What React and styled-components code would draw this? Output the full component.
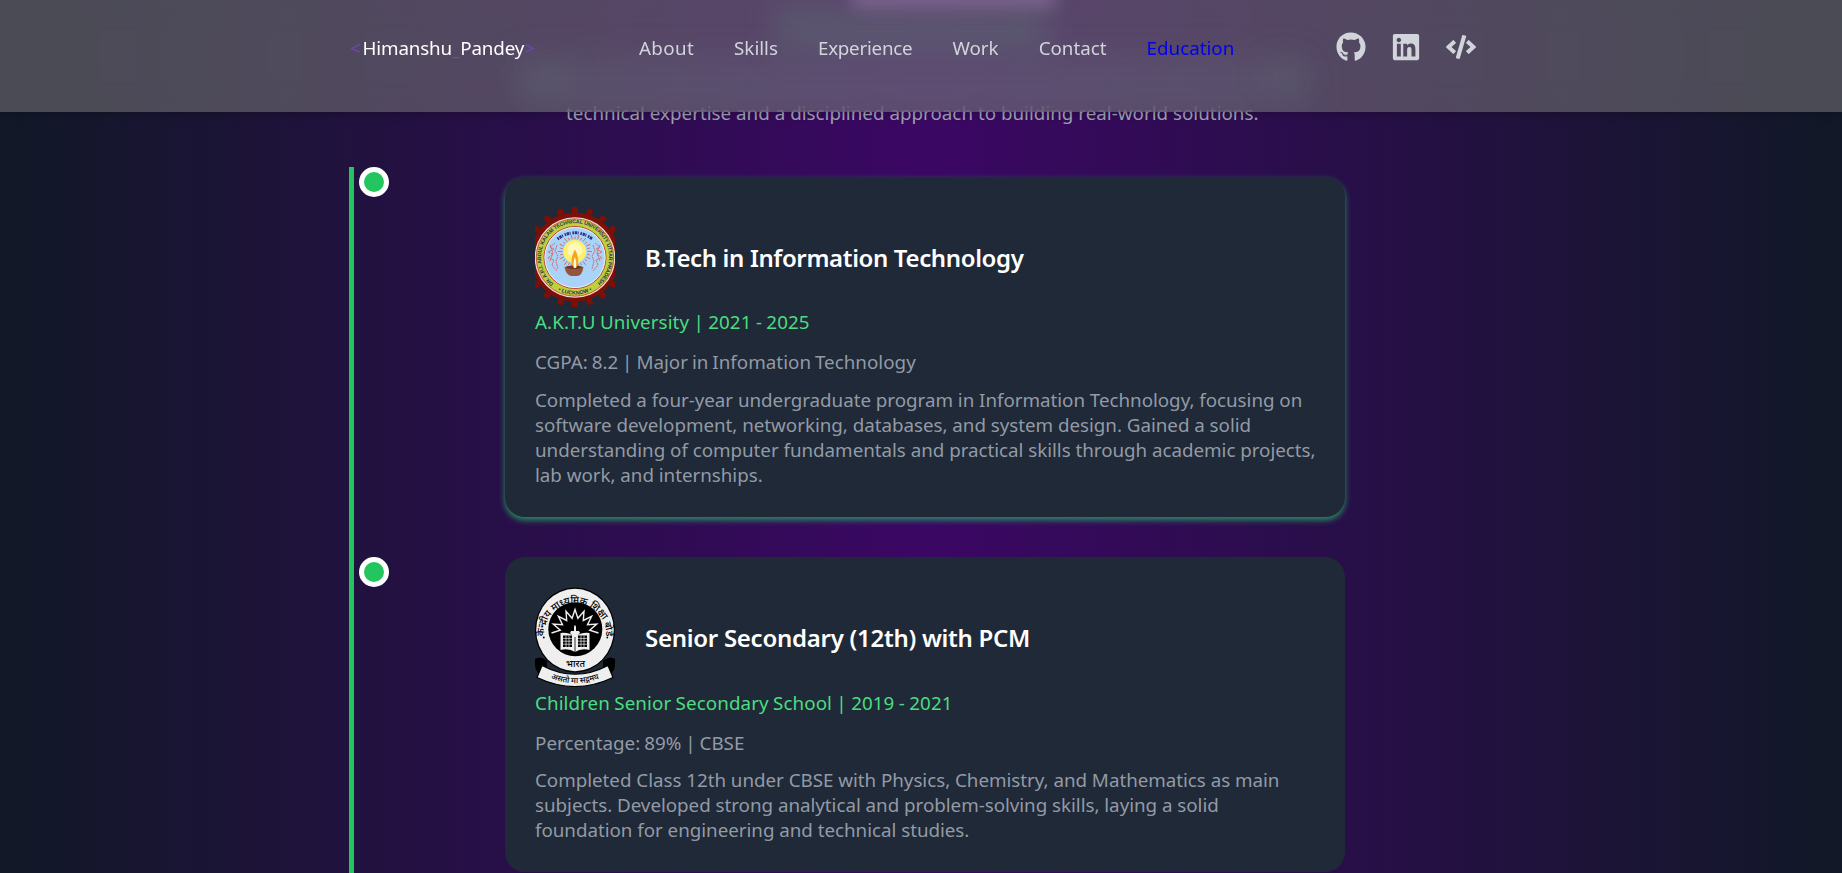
import React from "react";
import styled, { createGlobalStyle } from "styled-components";
import { FaGithub, FaLinkedin, FaCode } from "react-icons/fa";

const GlobalStyle = createGlobalStyle`
  * { box-sizing: border-box; }
  body {
    margin: 0;
    overflow: hidden;
    background: #111827;
    font-family: "Noto Sans", "Open Sans", sans-serif;
    font-size: 18.8px;
    line-height: 25px;
  }
  p, h3 { margin: 0; }
`;

const Page = styled.div`
  position: relative;
  height: 873px;
  overflow: hidden;
  background: linear-gradient(90deg, #111827 0%, #3b0764 50.5%, #111827 100%);
`;

const Header = styled.header`
  position: absolute;
  inset: 0 0 auto 0;
  z-index: 2;
  height: 112px;
  overflow: hidden;
  background: rgba(115, 113, 117, 0.58);
  backdrop-filter: blur(16px);
`;

const HeaderShadow = styled.div`
  position: absolute;
  inset: 0 0 auto 0;
  height: 112px;
  box-shadow: 0 3px 7px rgba(0, 0, 0, 0.18);
`;

const Glow = styled.span`
  position: absolute;
  left: ${(p) => p.$x}px;
  top: ${(p) => p.$y}px;
  width: ${(p) => p.$w}px;
  height: ${(p) => p.$h}px;
  background: ${(p) => p.$color};
  filter: blur(${(p) => p.$blur}px);
`;

const Nav = styled.nav`
  position: relative;
  display: flex;
  align-items: center;
  height: 94px;
  padding-left: 350px;
`;

const Brand = styled.div`
  width: 289px;
  padding-top: 2px;
  color: #fff;
  letter-spacing: -0.15px;
  white-space: nowrap;
`;

const Accent = styled.span`
  color: #7443be;
  letter-spacing: ${(p) => (p.$spaced ? "1.8px" : "inherit")};
`;

const Links = styled.ul`
  display: flex;
  gap: 40px;
  width: 697px;
  margin: 0;
  padding: 2px 0 0;
  list-style: none;
`;

const NavItem = styled.li`
  color: ${(p) => (p.$active ? "#0000ee" : "#d1d5db")};
  letter-spacing: ${(p) => p.$track}px;
  white-space: nowrap;
`;

const Socials = styled.div`
  display: flex;
  gap: 25px;
  color: #d1d5db;
  font-size: 30px;
  svg { display: block; }
`;

const Main = styled.main`
  padding-top: 101px;
`;

const Intro = styled.p`
  padding-left: 566px;
  height: 25px;
  color: #9ca3af;
  letter-spacing: 0.01px;
  white-space: nowrap;
`;

const Timeline = styled.section`
  display: flex;
  flex-direction: column;
  gap: 40.5px;
  margin: 41px 0 0 349px;
  padding-left: 5px;
  min-height: 760px;
  border-left: 5px solid #22c55e;
`;

const Entry = styled.article`
  display: grid;
  grid-template-columns: 30px 840px;
  column-gap: 116px;
  align-items: start;
`;

const Dot = styled.span`
  width: 30px;
  height: 30px;
  border: 5px solid #fff;
  border-radius: 50%;
  background: #22c55e;
`;

const Card = styled.div`
  margin-top: ${(p) => (p.$raised ? "9.5px" : "0")};
  padding: 30px 30px 29px;
  border-radius: 20px;
  background: #1f2937;
  box-shadow: ${(p) => (p.$raised ? "0 3px 6px rgba(38, 170, 98, 0.85)" : "none")};
`;

const CardHead = styled.div`
  display: flex;
  align-items: center;
  gap: 30px;
  height: 100px;
  margin-bottom: 3.5px;
`;

const Degree = styled.h3`
  padding-top: 2px;
  color: #fff;
  font-size: 24px;
  font-weight: 600;
  line-height: 32px;
  letter-spacing: ${(p) => p.$track}px;
  white-space: nowrap;
`;

const School = styled.p`
  margin-bottom: 15px;
  color: #4ade80;
  letter-spacing: 0.08px;
  word-spacing: -0.6px;
`;

const Score = styled.p`
  margin-bottom: 12.5px;
  color: #9ca3af;
  letter-spacing: 0.02px;
  word-spacing: -1px;
  opacity: 0.93;
`;

const Description = styled.p`
  color: #9ca3af;
  letter-spacing: -0.03px;
  white-space: pre;
  opacity: 0.93;
`;

const Emblem = styled.svg`
  display: block;
  flex: none;
  width: 80px;
  height: 100px;
`;

const range = (n) => Array.from({ length: n }, (_, i) => i);

function UniversityEmblem() {
  return (
    <Emblem viewBox="0 0 80 100">
      <defs>
        <path id="uniRing" d="M18.6 76.7 A34 34 0 1 1 61.4 76.7" />
        <path id="uniBase" d="M17 79.6 A37 37 0 0 0 63 79.6" />
      </defs>
      {range(20).map((i) => (
        <rect key={i} x="37" y="0" width="6" height="9" fill="#7b1008" transform={`rotate(${i * 18} 40 50)`} />
      ))}
      <circle cx="40" cy="50" r="44.5" fill="#7b1008" />
      <circle cx="40" cy="50.5" r="40.3" fill="#f3dcd2" />
      <circle cx="40" cy="50.5" r="38.7" fill="#bfd03a" stroke="#c43b30" strokeWidth=".8" />
      <circle cx="40" cy="50.5" r="31" fill="#a9d3f8" stroke="#c43b30" strokeWidth="1" />
      <circle cx="40" cy="50.5" r="30.1" fill="none" stroke="#eef4f0" strokeWidth=".9" />
      <g fill="#29305e" fontFamily="Liberation Sans, sans-serif" fontWeight="700">
        <text fontSize="5.2"><textPath href="#uniRing" textLength="166" lengthAdjust="spacing">DR. A.P.J. ABDUL KALAM TECHNICAL UNIVERSITY UTTAR PRADESH</textPath></text>
        <text fontSize="5.4"><textPath href="#uniBase" startOffset="50%" textAnchor="middle">• LUCKNOW •</textPath></text>
      </g>
      <path d="M22.5 32 Q40 19.5 57.5 32" fill="none" stroke="#26348a" strokeWidth="3" strokeDasharray="1.6 .7 2.4 .6 1 1.8" />
      <g stroke="#dc5a4c" strokeWidth=".8">
        {range(28).map((i) => (
          <path key={i} d={i % 2 ? "M40 32 V27.5" : "M40 32 V29.5"} transform={`rotate(${(i * 360) / 28} 40 44.5)`} />
        ))}
      </g>
      <g fill="none" stroke="#d66a6a" strokeWidth="1">
        <path d="M20 36 l-5 4 4 2 -6 3 5 2 -5 4 6 2 -2 5 5 6 M22 38 l-2 6 3 5 -2 5 2 8 M15 38 l3 8 -3 8" strokeDasharray="2 .6" />
        <path d="M60 36 l5 4 -4 2 6 3 -5 2 5 4 -6 2 2 5 -5 6 M58 38 l2 6 -3 5 2 5 -2 8 M65 38 l-3 8 3 8" strokeDasharray="2 .6" />
      </g>
      <circle cx="39.8" cy="44.5" r="11.4" fill="#fff06e" />
      <circle cx="39.8" cy="43" r="7.5" fill="#fff8b8" />
      <path d="M29.5 60 Q39 57 48.5 60 Q47 69 42 69 H36 Q31 68 29.5 60Z" fill="#94543e" />
      <ellipse cx="39" cy="60.3" rx="8" ry="1.8" fill="#6e3829" />
      <path d="M39 61 Q33.5 54 40 42.5 Q46 54 41 61Z" fill="#f3a51d" />
      <path d="M39.2 61 Q37.5 56 40 50 Q42 56 40.6 61Z" fill="#fffbd8" />
    </Emblem>
  );
}

const burst = range(17)
  .map((i) => {
    const a = Math.PI + (i / 16) * Math.PI;
    const r = i % 2 ? 15 : 23.5;
    return `${i ? "L" : "M"}${(40 + r * Math.cos(a)).toFixed(1)} ${(46 + r * Math.sin(a)).toFixed(1)}`;
  })
  .join(" ");

function BoardEmblem() {
  return (
    <Emblem viewBox="0 0 80 100">
      <defs>
        <path id="boardRing" d="M9.5 53 A31 31 0 1 1 70.5 53" />
        <path id="boardRibbon" d="M7 87.5 Q40 105 73 87.5" />
      </defs>
      <path d="M0 72 Q6 68 12 74 V84 L3 86 Q0 82 0 78Z M80 72 Q74 68 68 74 V84 L77 86 Q80 82 80 78Z" fill="#000" />
      <ellipse cx="40" cy="43" rx="40" ry="42.5" fill="#000" />
      <ellipse cx="40" cy="43" rx="38.8" ry="41.2" fill="#efefef" />
      <circle cx="40.3" cy="42.2" r="27" fill="#000" />
      <path d={burst} fill="none" stroke="#efefef" strokeWidth="1.4" />
      <path d="M36 44 h3 v-4 q1-4 2 0 v4 h3 l1 2 -3 3 v4 h-4 v-4 l-3-3Z" fill="#efefef" />
      <path d="M25.5 46 Q34 45 40 50 Q46 45 54.5 46 V63 Q46 61 40 65 Q34 61 25.5 63Z" fill="#efefef" />
      <path d="M28 48.5 H37 V60 H28Z M43 48.5 H52 V60 H43Z" fill="#000" />
      <path d="M28 51.4 H37 M28 54.2 H37 M28 57.2 H37 M31 48.5 V60 M34 48.5 V60 M43 51.4 H52 M43 54.2 H52 M43 57.2 H52 M46 48.5 V60 M49 48.5 V60" stroke="#efefef" strokeWidth=".7" />
      <path d="M40 50 V65" stroke="#000" strokeWidth=".8" />
      <path d="M7 78.5 Q40 96 73 78.5 L78 90.5 Q40 108.5 2 90.5Z" fill="#efefef" stroke="#000" strokeWidth="1.2" />
      <g fill="#000" fontFamily="Noto Sans Devanagari, Noto Sans, sans-serif" fontWeight="500">
        <text fontSize="9.9"><textPath href="#boardRing" startOffset="50%" textAnchor="middle">केन्द्रीय माध्यमिक शिक्षा बोर्ड</textPath></text>
        <text x="40.5" y="79.5" fontSize="9.5" textAnchor="middle">भारत</text>
        <text fontSize="8"><textPath href="#boardRibbon" startOffset="50%" textAnchor="middle">असतो मा सद्गमय</textPath></text>
      </g>
      <circle cx="8.8" cy="50.5" r=".9" />
      <circle cx="72.3" cy="50.5" r=".9" />
    </Emblem>
  );
}

const links = [
  { label: "About", track: 0.35 },
  { label: "Skills", track: 0 },
  { label: "Experience", track: -0.25 },
  { label: "Work", track: 0 },
  { label: "Contact", track: 0 },
  { label: "Education", track: 0, active: true },
];

const entries = [
  {
    Logo: UniversityEmblem,
    raised: true,
    track: -0.36,
    degree: "B.Tech in Information Technology",
    school: "A.K.T.U University | 2021 - 2025",
    score: "CGPA: 8.2 | Major in Infomation Technology",
    text: "Completed a four-year undergraduate program in Information Technology, focusing on\nsoftware development, networking, databases, and system design. Gained a solid\nunderstanding of computer fundamentals and practical skills through academic projects,\nlab work, and internships.",
  },
  {
    Logo: BoardEmblem,
    raised: false,
    track: -0.27,
    degree: "Senior Secondary (12th) with PCM",
    school: "Children Senior Secondary School | 2019 - 2021",
    score: "Percentage: 89% | CBSE",
    text: "Completed Class 12th under CBSE with Physics, Chemistry, and Mathematics as main\nsubjects. Developed strong analytical and problem-solving skills, laying a solid\nfoundation for engineering and technical studies.",
  },
];

export default function App() {
  return (
    <Page>
      <GlobalStyle />
      <HeaderShadow />
      <Header>
        <Glow $x={515} $y={58} $w={795} $h={50} $blur={16} $color="rgba(105,112,135,.24)" />
        <Glow $x={775} $y={6} $w={275} $h={46} $blur={14} $color="rgba(92,112,118,.4)" />
        <Glow $x={852} $y={-10} $w={204} $h={17} $blur={8} $color="rgba(170,135,190,.45)" />
        <Glow $x={525} $y={65} $w={45} $h={26} $blur={14} $color="rgba(98,115,112,.18)" />
        <Glow $x={1265} $y={60} $w={40} $h={30} $blur={14} $color="rgba(98,115,112,.14)" />
        <Nav>
          <Brand>
            <Accent $spaced>&lt;</Accent>Himanshu<Accent>_</Accent>Pandey<Accent>&gt;</Accent>
          </Brand>
          <Links>
            {links.map((l) => (
              <NavItem key={l.label} $active={l.active} $track={l.track}>{l.label}</NavItem>
            ))}
          </Links>
          <Socials>
            <FaGithub />
            <FaLinkedin />
            <FaCode />
          </Socials>
        </Nav>
      </Header>
      <Main>
        <Intro>technical expertise and a disciplined approach to building real-world solutions.</Intro>
        <Timeline>
          {entries.map(({ Logo, ...e }) => (
            <Entry key={e.degree}>
              <Dot />
              <Card $raised={e.raised}>
                <CardHead>
                  <Logo />
                  <Degree $track={e.track}>{e.degree}</Degree>
                </CardHead>
                <School>{e.school}</School>
                <Score>{e.score}</Score>
                <Description>{e.text}</Description>
              </Card>
            </Entry>
          ))}
        </Timeline>
      </Main>
    </Page>
  );
}
